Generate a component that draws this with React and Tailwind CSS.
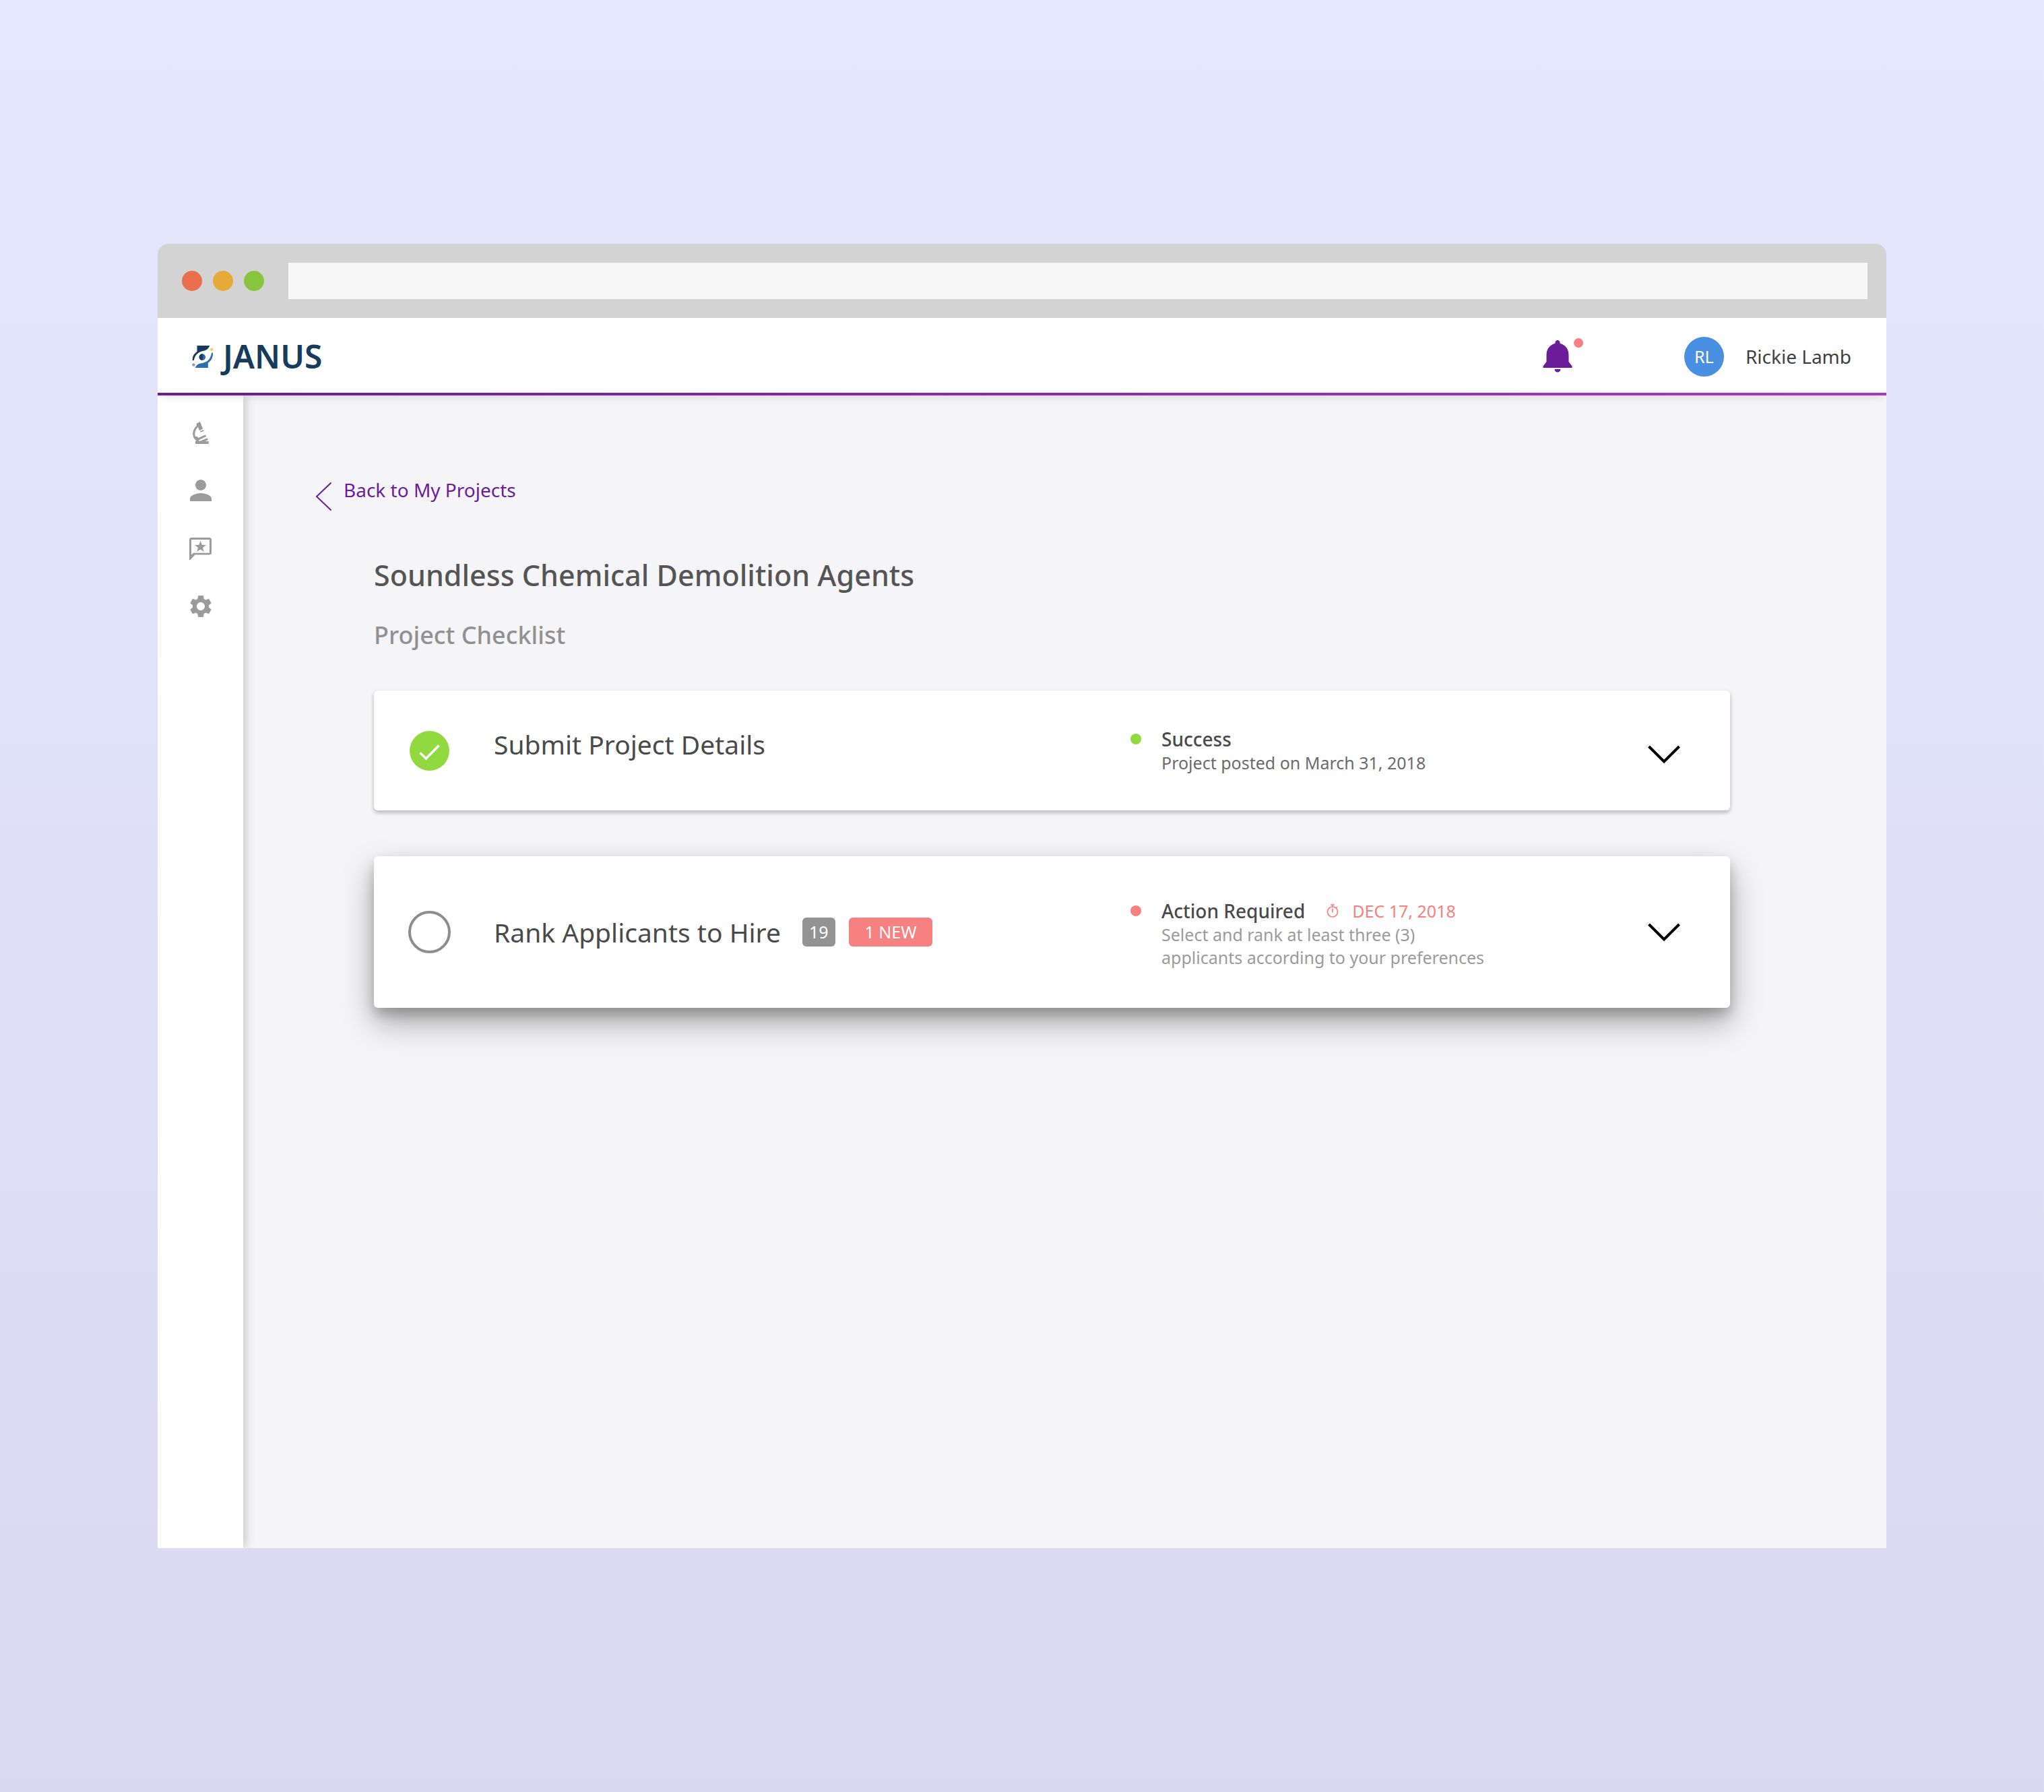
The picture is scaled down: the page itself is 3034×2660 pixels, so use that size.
import React from "react";
import { MdPerson, MdSettings } from "react-icons/md";

function ChromeBar() {
  return (
    <div className="flex h-[110px] items-center gap-9 bg-[#d3d3d3] pl-9 pr-7">
      <div className="flex gap-4">
        <span className="size-[30px] rounded-full bg-[#ea6f4c]" />
        <span className="size-[30px] rounded-full bg-[#e7a937]" />
        <span className="size-[30px] rounded-full bg-[#86c53d]" />
      </div>
      <input aria-label="Address" className="h-[54px] min-w-0 flex-1 bg-[#f7f7f7] px-4 text-2xl outline-none" />
    </div>
  );
}

function LogoMark() {
  return (
    <svg viewBox="-2 0 94 97" className="h-[33px] w-8" aria-hidden="true">
      <path d="M20 0H75C70 14 62 20 48 23 28 27 12 38 6 65H0C0 48 3 40 20 26z" fill="#163b5c" />
      <path d="M89 31c1 18-4 32-21 45v21H12c6-12 12-17 22-19 26-4 43-12 50-47z" fill="#2a6fb0" />
      <circle cx="43" cy="50" r="14" fill="#2a6fb0" />
      <path d="M43 36a14 14 0 1 0 0 28c4-8 4-20 0-28z" fill="#163b5c" />
      <circle cx="84" cy="17" r="6.500" fill="#ffcf4d" />
      <circle cx="5" cy="84" r="6.500" fill="#95989a" />
    </svg>
  );
}

function Header() {
  return (
    <header className="relative z-20 bg-white shadow-[0_8px_12px_-6px_rgba(0,0,0,0.12)]">
      <div className="flex h-[111px] items-center pt-[3px] pl-[51px] pr-[52px]">
        <a href="#home" aria-label="Janus" className="flex items-center gap-3.5">
          <LogoMark />
          <span className="text-5xl leading-[60px] font-semibold text-[#163b5c]">JANUS</span>
        </a>
        <button aria-label="Notifications" className="relative ml-auto mr-[150px] h-[54px] w-[65px]">
          <svg viewBox="0 0 44 48" className="ml-[5px] h-12 w-11" aria-hidden="true">
            <path d="M22 0c-2.200 0-3.700 1.800-3.700 4.800C10 7 5.500 13.500 5.500 22v10L.5 38.500V41h43v-2.500L38.500 32V22c0-8.500-4.500-15-12.800-17.200C25.700 1.800 24.200 0 22 0zM17.500 43h9c0 2.500-2 4.500-4.500 4.500S17.500 45.500 17.500 43z" fill="#6b1c99" />
          </svg>
          <span className="absolute top-0 right-0 size-3.5 rounded-full bg-[#f78080]" />
        </button>
        <button className="flex items-center gap-8 text-[28px] leading-10 text-[#3f3f3f]">
          <span className="flex size-[59px] items-center justify-center rounded-full bg-[#4a90e2] text-[25px] text-white">RL</span>
          <span>Rickie Lamb</span>
        </button>
      </div>
      <div className="h-1 bg-linear-to-r from-[#6b1c99] to-[#a838cc]" />
    </header>
  );
}

function Sidebar() {
  const link = "flex size-10 items-center justify-center";
  return (
    <nav aria-label="Main" className="relative z-10 flex w-[127px] shrink-0 flex-col items-center gap-[46px] bg-white pt-[35px] text-[#9b9b9b] shadow-[3px_0_14px_rgba(0,0,0,0.2)]">
      <a href="#research" aria-label="Research" className={link}>
        <svg viewBox="166 141 70 98" className="h-[33px] w-6" fill="currentColor" aria-hidden="true">
          <path d="m182 149 16-8 12 31-15 8-6-16c-12 12-17 28-12 42 6-1 11 1 13 6l32-14 3 8-31 15-3 5h8l31-13 3 9-14 5h17v12h-59v-11l4-3c-21-17-20-48 2-67zM198 183l15-6 2 5-15 6z" />
        </svg>
      </a>
      <a href="#profile" aria-label="Profile" className={link}><MdPerson size={48} className="shrink-0" /></a>
      <a href="#reviews" aria-label="Reviews" className={link}>
        <svg viewBox="0 0 33 33" className="size-[33px]" fill="currentColor" aria-hidden="true">
          <path fillRule="evenodd" d="M3.500 0h26A3.500 3.500 0 0 1 33 3.500V22a3.500 3.500 0 0 1-3.500 3.500H8.500L1.500 33H0V3.500A3.500 3.500 0 0 1 3.500 0zM3 3v22.500L6 22.700h24V3z" />
          <path d="m16.500 4.800 2.200 5.900 6.200.3-4.900 3.900 1.700 6.200-5.200-3.500-5.200 3.500 1.700-6.200-4.900-3.900 6.200-.3z" />
        </svg>
      </a>
      <a href="#settings" aria-label="Settings" className={link}><MdSettings size={40} className="shrink-0" /></a>
    </nav>
  );
}

function Chevron() {
  return (
    <svg viewBox="0 0 48 28" className="h-7 w-12" fill="none" stroke="#000" strokeWidth="4" aria-hidden="true">
      <path d="m1.500 2 22.500 22.500L46.500 2" />
    </svg>
  );
}

function Stopwatch() {
  return (
    <svg viewBox="0 0 18 20" className="h-5 w-[18px]" fill="none" stroke="currentColor" strokeWidth="1.700" aria-hidden="true">
      <circle cx="9" cy="11.500" r="7.500" />
      <path d="M6.300 1.200h5.400M9 1v3M9 6.500v6M14 5.500l1.800-1.300" />
    </svg>
  );
}

export default function App() {
  return (
    <div className="min-h-screen bg-linear-to-b from-[#e4e8ff] to-[#dad8f0] px-[234px] py-[362px] font-['Noto_Sans',sans-serif]">
      <div className="flex min-h-[1936px] flex-col overflow-hidden rounded-t-2xl">
        <ChromeBar />
        <Header />
        <div className="flex flex-1">
          <Sidebar />
          <main className="flex-1 bg-[#f5f5f7] pt-[120px] pr-[232px] pl-[107px]">
            <a href="#projects" className="flex gap-[17px] text-[28px] leading-10 text-[#6b1c99]">
              <svg viewBox="0 0 25 44" className="mt-2 h-11 w-[25px]" fill="none" stroke="currentColor" strokeWidth="2" aria-hidden="true">
                <path d="M23.500 1.500 2 22l21.500 20.500" />
              </svg>
              <span>Back to My Projects</span>
            </a>
            <div className="pt-[65px] pl-[87px]">
              <h1 className="text-[43px] leading-[60px] font-medium text-[#555]">Soundless Chemical Demolition Agents</h1>
              <h2 className="mt-[34px] text-4xl leading-[50px] font-medium text-[#919191]">Project Checklist</h2>
              <ul className="mt-[57px] flex flex-col gap-[68px] text-[#4a4a4a]">
                <li className="flex h-[178px] items-center rounded-md bg-white pr-[74px] pl-[53px] shadow-[0_3px_6px_rgba(0,0,0,0.28)]">
                  <svg viewBox="0 0 59 59" className="size-[59px] shrink-0" role="img" aria-label="Complete">
                    <circle cx="29.500" cy="29.500" r="29.500" fill="#90d93f" />
                    <path d="m15.500 32.500 9 8.500L43.500 21.500" fill="none" stroke="#fff" strokeWidth="3.500" />
                  </svg>
                  <h3 className="mb-[18px] ml-[66px] flex-1 text-[39px] leading-[54px]">Submit Project Details</h3>
                  <div className="flex w-[768px] gap-[30px]">
                    <span className="mt-2.5 size-4 rounded-full bg-[#90d93f]" />
                    <div>
                      <p className="text-[28px] leading-9 font-medium">Success</p>
                      <p className="text-[25px] leading-[34px] text-[#6b6b6b]">Project posted on March 31, 2018</p>
                    </div>
                  </div>
                  <button aria-label="Expand project details" className="mt-3"><Chevron /></button>
                </li>
                <li className="flex h-[225px] items-center rounded-md bg-white pr-[74px] pl-[51px] shadow-[0_22px_48px_rgba(0,0,0,0.32),0_10px_18px_rgba(0,0,0,0.2)]">
                  <span role="img" aria-label="Not complete" className="size-[63px] shrink-0 rounded-full border-4 border-[#8d8d8d]" />
                  <div className="ml-16 flex flex-1 items-center">
                    <h3 className="text-[39px] leading-[54px]">Rank Applicants to Hire</h3>
                    <span className="ml-8 rounded-md bg-[#939393] px-2.5 text-[25px] leading-[43px] text-white">19</span>
                    <span className="ml-5 rounded-md bg-[#f78080] px-6 text-[25px] leading-[43px] text-white">1 NEW</span>
                  </div>
                  <div className="flex w-[768px] gap-[30px] pt-1">
                    <span className="mt-2.5 size-4 rounded-full bg-[#f78080]" />
                    <div>
                      <div className="flex items-center">
                        <p className="text-[28px] leading-9 font-medium">Action Required</p>
                        <p className="ml-8 flex items-center gap-5 text-[25px] leading-[34px] text-[#f78080]"><Stopwatch />DEC 17, 2018</p>
                      </div>
                      <p className="text-[25px] leading-[34px] text-[#9b9b9b]">Select and rank at least three (3)<br />applicants according to your preferences</p>
                    </div>
                  </div>
                  <button aria-label="Expand applicant ranking"><Chevron /></button>
                </li>
              </ul>
            </div>
          </main>
        </div>
      </div>
    </div>
  );
}
